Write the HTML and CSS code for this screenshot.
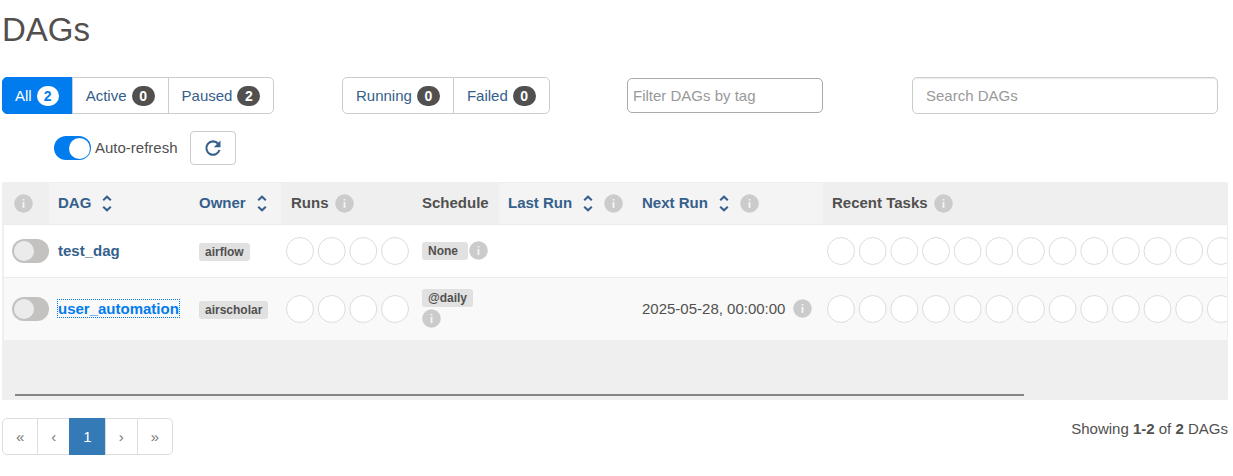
FILE: index.html
```html
<!DOCTYPE html>
<html lang="en">
<head>
<meta charset="utf-8">
<title>DAGs</title>
<link rel="stylesheet" href="styles.css">
</head>
<body>
<svg class="defs" aria-hidden="true">
  <symbol id="info" viewBox="0 0 19 19"><circle cx="9.500" cy="9.500" r="9.300" fill="#cbcbcb"/><path d="M8.600 5h1.800v1.600H8.600zM8.600 8h1.800v6H8.600z" fill="#f4f4f4"/></symbol>
  <symbol id="sort" viewBox="0 0 10 17"><path d="M1.200 5.300 5 1.700l3.800 3.600M1.200 11.700 5 15.300l3.800-3.600" fill="none" stroke="currentColor" stroke-width="2"/></symbol>
  <symbol id="runs" viewBox="0 0 124 28"><g fill="#fff" stroke="#dcdcdc"><circle cx="14" cy="14" r="13.500"/><circle cx="45.700" cy="14" r="13.500"/><circle cx="77.300" cy="14" r="13.500"/><circle cx="109" cy="14" r="13.500"/></g></symbol>
</svg>
<main class="page">
  <h1 class="title">DAGs</h1>

  <div class="toolbar">
    <nav class="group" aria-label="DAG status">
      <a class="btn active" href="#all">All <span class="count">2</span></a>
      <a class="btn" href="#active">Active <span class="count">0</span></a>
      <a class="btn" href="#paused">Paused <span class="count">2</span></a>
    </nav>
    <nav class="group" aria-label="Run state">
      <a class="btn" href="#running">Running <span class="count">0</span></a>
      <a class="btn" href="#failed">Failed <span class="count">0</span></a>
    </nav>
    <input class="field tags" type="text" aria-label="Filter DAGs by tag" placeholder="Filter DAGs by tag">
    <input class="field search" type="search" aria-label="Search DAGs" placeholder="Search DAGs">
  </div>

  <div class="refresh">
    <label class="refresh-label"><input class="switch on" type="checkbox" checked>Auto-refresh</label>
    <button class="refresh-btn" type="button" aria-label="Refresh">
      <svg width="18" height="18" viewBox="0 0 18 18"><path d="M14.200 4.700A6.700 6.700 0 1 0 15.500 11" fill="none" stroke="currentColor" stroke-width="2.100"/><path d="M16.500 1.500v6.700H9.800z" fill="currentColor"/></svg>
    </button>
  </div>

  <div class="table-wrap">
    <table class="dags">
      <colgroup><col class="c-toggle"><col class="c-dag"><col class="c-owner"><col class="c-runs"><col class="c-schedule"><col class="c-last"><col class="c-next"><col></colgroup>
      <thead>
        <tr>
          <th><div class="head"><svg class="info"><use href="#info"/></svg></div></th>
          <th class="sortable"><div class="head"><a href="#dag">DAG<svg class="sort"><use href="#sort"/></svg></a></div></th>
          <th class="sortable"><div class="head"><a href="#owner">Owner<svg class="sort"><use href="#sort"/></svg></a></div></th>
          <th><div class="head">Runs<svg class="info"><use href="#info"/></svg></div></th>
          <th><div class="head">Schedule</div></th>
          <th class="sortable"><div class="head wide"><a href="#last">Last Run<svg class="sort"><use href="#sort"/></svg></a><svg class="info"><use href="#info"/></svg></div></th>
          <th class="sortable"><div class="head wide"><a href="#next">Next Run<svg class="sort"><use href="#sort"/></svg></a><svg class="info"><use href="#info"/></svg></div></th>
          <th><div class="head">Recent Tasks<svg class="info"><use href="#info"/></svg></div></th>
        </tr>
      </thead>
      <tbody>
        <tr class="short">
          <td><input class="switch" type="checkbox" aria-label="Unpause test_dag"></td>
          <td><a class="dag" href="#test_dag">test_dag</a></td>
          <td><span class="tag">airflow</span></td>
          <td class="circles runs"><svg class="states"><use href="#runs" width="124" height="28"/></svg></td>
          <td><div class="schedule"><span class="tag none">None</span><svg class="info"><use href="#info"/></svg></div></td>
          <td></td>
          <td></td>
          <td class="circles"><svg class="tasks"><use href="#runs" width="124" height="28"/><use href="#runs" x="126.600" width="124" height="28"/><use href="#runs" x="253.200" width="124" height="28"/><use href="#runs" x="379.800" width="124" height="28"/></svg></td>
        </tr>
        <tr class="tall">
          <td><input class="switch" type="checkbox" aria-label="Unpause user_automation"></td>
          <td><a class="dag focused" href="#user_automation">user_automation</a></td>
          <td><span class="tag">airscholar</span></td>
          <td class="circles runs"><svg class="states"><use href="#runs" width="124" height="28"/></svg></td>
          <td><div class="schedule stacked"><span class="tag">@daily</span><svg class="info"><use href="#info"/></svg></div></td>
          <td></td>
          <td><div class="when"><time datetime="2025-05-28T00:00:00">2025-05-28, 00:00:00</time><svg class="info"><use href="#info"/></svg></div></td>
          <td class="circles"><svg class="tasks"><use href="#runs" width="124" height="28"/><use href="#runs" x="126.600" width="124" height="28"/><use href="#runs" x="253.200" width="124" height="28"/><use href="#runs" x="379.800" width="124" height="28"/></svg></td>
        </tr>
      </tbody>
    </table>
    <div class="scroll"></div>
  </div>

  <footer class="footer">
    <nav class="pages" aria-label="Pagination">
      <a href="#first">«</a><a href="#prev">‹</a><a class="current" href="#1" aria-current="page">1</a><a href="#next-page">›</a><a href="#last-page">»</a>
    </nav>
    <p class="summary">Showing <strong>1-2</strong> of <strong>2</strong> DAGs</p>
  </footer>
</main>
</body>
</html>
```

FILE: styles.css
```css
* { box-sizing: border-box; }
body {
  margin: 0;
  background: #fff;
  color: #51504f;
  font: 15px/20px "Liberation Sans", Arial, sans-serif;
}
a { color: #34608b; text-decoration: none; }
svg { display: block; flex: none; }
.defs { position: absolute; width: 0; height: 0; }
.page { padding: 10px 5px 20px 2px; }
.title { margin: 0 0 27px; font-size: 33px; line-height: 40px; font-weight: 400; }

.toolbar {
  display: grid;
  grid-template-columns: 340fr 285fr 285fr 306fr;
  align-items: center;
  padding-right: 10px;
}
.group { display: flex; }
.btn {
  display: flex;
  align-items: center;
  gap: 5px;
  height: 37px;
  padding: 0 13px;
  border: 1px solid #ccc;
  white-space: nowrap;
}
.btn + .btn { margin-left: -1px; }
.btn:first-child { border-radius: 5px 0 0 5px; }
.btn:last-child { border-radius: 0 5px 5px 0; }
.btn.active { padding-left: 12px; background: #017cee; border-color: #017cee; color: #fff; }
.count {
  min-width: 23px;
  border-radius: 10px;
  background: #51504f;
  color: #fff;
  font-size: 14px;
  font-weight: 700;
  text-align: center;
}
.active .count { min-width: 22px; background: #fff; color: #017cee; }

.field {
  appearance: none;
  margin: 0;
  border: 1px solid #aaa;
  border-radius: 5px;
  background: #fff;
  color: #51504f;
  font: inherit;
}
.field::placeholder { color: #999; opacity: 1; }
.tags { width: 196px; height: 35px; padding: 0 5px; }
.search {
  width: 100%;
  height: 37px;
  padding: 0 13px;
  border-color: #ccc;
  box-shadow: inset 0 1px 1px rgba(0, 0, 0, 0.08);
}

.refresh { display: flex; align-items: center; gap: 12px; padding: 17px 0 17px 52px; }
.refresh-label { display: flex; align-items: center; gap: 4px; }
.refresh-btn {
  display: flex;
  align-items: center;
  justify-content: center;
  width: 46px;
  height: 34px;
  padding: 0;
  border: 1px solid #ccc;
  border-radius: 4px;
  background: #fff;
  color: #34608b;
}
.switch {
  appearance: none;
  display: flex;
  align-items: center;
  width: 37px;
  height: 24px;
  margin: 0;
  padding: 0 2px;
  border-radius: 12px;
  background: #c4c2c1;
}
.switch::before {
  content: "";
  width: 20px;
  height: 20px;
  border-radius: 50%;
  background: #ebebeb;
}
.switch.on { justify-content: flex-end; padding: 0 1px; background: #017cee; }
.switch.on::before { width: 21px; height: 21px; background: #fff; }

.table-wrap {
  overflow: hidden;
  border: 1px solid #efefef;
  border-left-width: 2px;
  border-radius: 2px;
  background: #efefef;
}
.dags { width: 100%; table-layout: fixed; border-collapse: collapse; }
.c-toggle { width: 45px; }
.c-dag { width: 140px; }
.c-owner { width: 92px; }
.c-runs { width: 132px; }
.c-schedule { width: 86px; }
.c-last { width: 134px; }
.c-next { width: 190px; }
th, td { padding: 0 9px; text-align: left; white-space: nowrap; }
th { height: 41px; }
th.sortable { background: #f4f4f4; }
th:first-child, td:first-child { padding: 0 8px; }
th:first-child { padding-left: 10px; }
th:nth-child(3), td:nth-child(3), th:nth-child(4) { padding-left: 10px; }
.head, .head a, .when { display: flex; align-items: center; }
.head { gap: 6px; }
.head a { gap: 11px; }
.head.wide { gap: 11px; }
.info { width: 19px; height: 19px; }
.sort { width: 10px; height: 17px; }
tbody tr { border-top: 1px solid #ebebeb; }
.short { background: #fff; }
.short td { height: 53px; }
.tall { background: #f9f9f9; }
.tall td { height: 63px; }
td.circles { padding: 0 4px; }
td.runs { padding-left: 5px; }
.states { width: 124px; height: 28px; }
.tasks { width: 504px; height: 28px; }
.dag { font-weight: 700; }
.dag.focused { color: #017cee; outline: 1px dotted #017cee; }
.tag {
  display: inline-block;
  padding: 0 6px;
  border-radius: 3px;
  background: #e1e1e1;
  font-size: 12px;
  line-height: 18px;
  font-weight: 700;
}
.none { padding-right: 10px; }
.schedule { display: flex; align-items: center; gap: 1px; }
.stacked { flex-direction: column; align-items: flex-start; gap: 2px; }
.when { gap: 8px; }
td:last-child { overflow: hidden; }
.scroll { height: 59px; padding: 0 203px 3px 11px; display: flex; align-items: flex-end; }
.scroll::before { content: ""; width: 100%; height: 2px; background: #858585; }

.footer { display: flex; justify-content: space-between; padding-top: 18px; }
.pages { display: flex; }
.pages a {
  display: flex;
  align-items: center;
  height: 37px;
  padding: 0 13px;
  border: 1px solid #ddd;
  color: #777;
}
.pages a + a { margin-left: -1px; }
.pages a:first-child { border-radius: 5px 0 0 5px; }
.pages a:last-child { border-radius: 0 5px 5px 0; }
.pages .current { padding: 0 13px; background: #337ab7; border-color: #337ab7; color: #fff; }
.summary { margin: 1px 0 0; }
```
